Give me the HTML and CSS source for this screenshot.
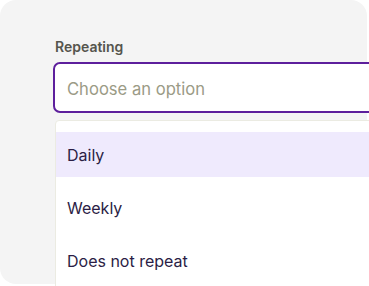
FILE: index.html
```html
<!DOCTYPE html>
<html lang="en">
<head>
  <meta charset="UTF-8">
  <title>Repeating</title>
  <link rel="stylesheet" href="styles.css">
</head>
<body>
<div class="card">
  <div class="field">
    <label class="label">Repeating</label>
    <div class="select">Choose an option</div>
    <ul class="menu">
      <li class="option active">Daily</li>
      <li class="option">Weekly</li>
      <li class="option">Does not repeat</li>
    </ul>
  </div>
</div>
</body>
</html>
```

FILE: styles.css
```css
body {
  margin: 0;
  background: #ffffff;
  font-family: Inter, "Noto Sans", sans-serif;
  overflow: hidden;
  width: 369px;
  height: 286px;
}

.card {
  width: 367px;
  height: 284px;
  background: #f4f4f4;
  border-radius: 16px;
  padding: 38px 0 0 53px;
  box-sizing: border-box;
}

.field {
  width: 360px;
}

.label {
  display: block;
  font-size: 14px;
  line-height: 17px;
  font-weight: 600;
  color: #55554d;
  margin: 0 0 7px 2px;
}

.select {
  border: 2px solid #5d1f9c;
  border-radius: 7px;
  background: #fff;
  padding: 3px 0 0 12px;
  height: 44px;
  display: flex;
  align-items: center;
  font-size: 16.6px;
  color: #9b9b86;
}

.menu {
  list-style: none;
  margin: 7px 0 0 2px;
  padding: 11px 0 0;
  background: #fff;
  border: 1px solid #ebebe2;
  border-radius: 4px;
}

.option {
  height: 45px;
  margin-bottom: 8px;
  padding-left: 11px;
  display: flex;
  align-items: center;
  font-size: 16px;
  color: #2b1d45;
}

.option.active {
  background: #efeafd;
}
```
